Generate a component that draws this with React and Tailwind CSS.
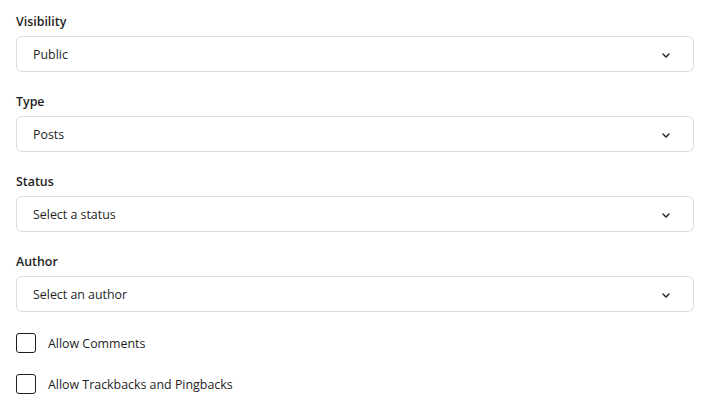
import { useState } from 'react';

const FIELDS = [
  { label: 'Visibility', value: 'Public' },
  { label: 'Type', value: 'Posts' },
  { label: 'Status', value: 'Select a status' },
  { label: 'Author', value: 'Select an author' },
];

const OPTIONS = ['Allow Comments', 'Allow Trackbacks and Pingbacks'];

function Chevron() {
  return (
    <svg viewBox="0 0 8 5" className="h-[5px] w-2" fill="none">
      <path d="M1 1l3 3 3-3" stroke="#1e1e1e" strokeWidth="1.4" strokeLinecap="round" strokeLinejoin="round" />
    </svg>
  );
}

export default function App() {
  const [checked, setChecked] = useState({});

  return (
    <div className="min-h-[403px] bg-white pl-4 pr-[17px] pt-[13px] font-['Segoe_UI','Open_Sans',sans-serif] text-[12.4px] text-[#1e1e1e]">
      {FIELDS.map((f) => (
        <div key={f.label} className="mb-[21px]">
          <div className="mb-[5px] h-[18px] leading-[18px] font-semibold">{f.label}</div>
          <button
            type="button"
            className="flex h-9 w-full items-center justify-between rounded-md border border-[#dddddd] bg-white pl-4 pr-[23px] pt-[3px] text-left"
          >
            <span>{f.value}</span>
            <Chevron />
          </button>
        </div>
      ))}

      <div className="flex flex-col gap-[21px]">
        {OPTIONS.map((o) => (
          <label key={o} className="flex h-5 items-center gap-3">
            <input
              type="checkbox"
              checked={!!checked[o]}
              onChange={() => setChecked({ ...checked, [o]: !checked[o] })}
              className="h-5 w-5 appearance-none rounded-[3px] border-[1.5px] border-[#1e1e1e] bg-white"
            />
            <span className="pt-[3px]">{o}</span>
          </label>
        ))}
      </div>
    </div>
  );
}
